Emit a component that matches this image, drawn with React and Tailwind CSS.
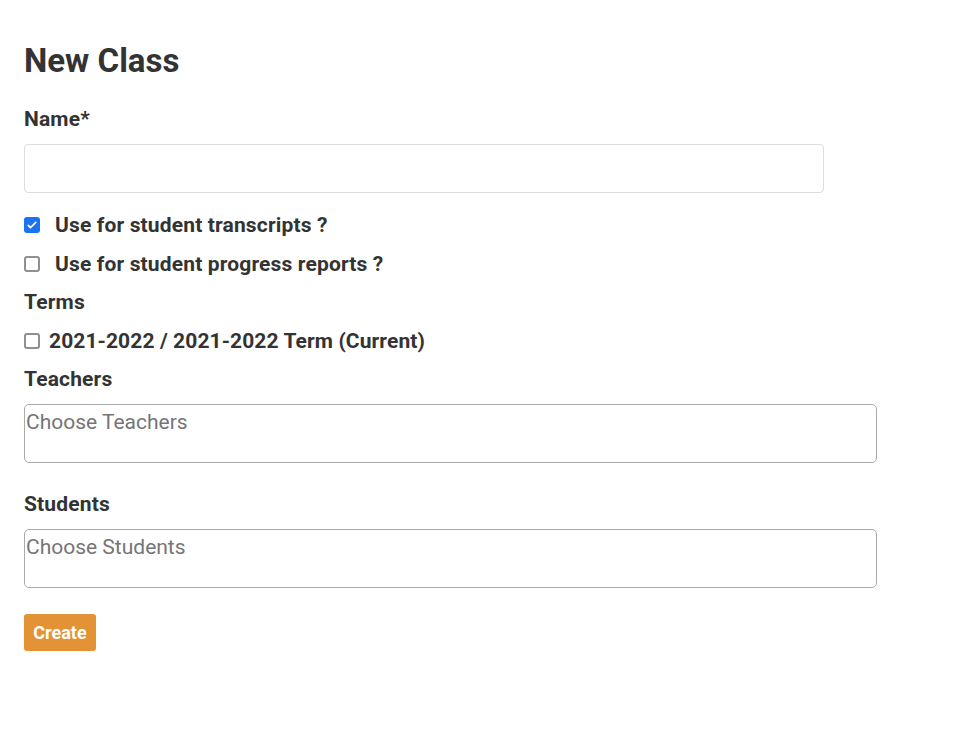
import { useState } from "react";

function Box({ checked, onClick }) {
	return (
		<span
			onClick={onClick}
			className={
				checked
					? "flex h-4 w-4 shrink-0 items-center justify-center rounded-[3px] bg-[#1a73f0]"
					: "flex h-4 w-4 shrink-0 rounded-[3px] border-2 border-[#8e8e93] bg-white"
			}
		>
			{checked && (
				<svg viewBox="0 0 16 16" className="h-3 w-3" fill="none">
					<path d="M3 8.5l3 3 7-7" stroke="white" strokeWidth="2.2" strokeLinecap="round" strokeLinejoin="round" />
				</svg>
			)}
		</span>
	);
}

export default function App() {
	const [transcripts, setTranscripts] = useState(true);
	const [progress, setProgress] = useState(false);
	const [term, setTerm] = useState(false);

	return (
		<div className="min-h-screen bg-white px-6 pt-[41px] text-[#333] font-['Roboto',sans-serif]">
			<h1 className="text-[33px] font-bold leading-[40px]">New Class</h1>

			{/* Name */}
			<label className="mt-[26px] block text-[21px] font-bold leading-[24px] tracking-[0.15px]">Name*</label>
			<input className="mt-[13px] block h-[49px] w-[800px] rounded-[4px] border border-[#dddddd] bg-white px-3 outline-none" />

			{/* flags */}
			<div className="mt-[20px] flex items-center gap-[15px] text-[21px] font-bold leading-[24px] tracking-[0.15px]">
				<Box checked={transcripts} onClick={() => setTranscripts(!transcripts)} />
				<span>Use for student transcripts ?</span>
			</div>
			<div className="mt-[15px] flex items-center gap-[15px] text-[21px] font-bold leading-[24px] tracking-[0.15px]">
				<Box checked={progress} onClick={() => setProgress(!progress)} />
				<span>Use for student progress reports ?</span>
			</div>

			<div className="mt-[14px] text-[21px] font-bold leading-[24px] tracking-[0.15px]">Terms</div>
			<div className="mt-[15px] flex items-center gap-[9px] text-[21px] font-bold leading-[24px] tracking-[0.1px]">
				<Box checked={term} onClick={() => setTerm(!term)} />
				<span>2021-2022 / 2021-2022 Term (Current)</span>
			</div>

			{/* Teachers */}
			<div className="mt-[14px] text-[21px] font-bold leading-[24px] tracking-[0.15px]">Teachers</div>
			<div className="mt-[13px] h-[59px] w-[853px] rounded-[5px] border border-[#aaaaaa] pl-px pt-[5px] text-[21px] leading-[24px] text-[#757575]">
				Choose Teachers
			</div>

			{/* Students */}
			<div className="mt-[29px] text-[21px] font-bold leading-[24px] tracking-[0.15px]">Students</div>
			<div className="mt-[13px] h-[59px] w-[853px] rounded-[5px] border border-[#aaaaaa] pl-px pt-[5px] text-[21px] leading-[24px] text-[#757575]">
				Choose Students
			</div>

			<button className="mt-[26px] block h-[37px] w-[72px] rounded-[3px] bg-[#e39236] text-[18px] font-bold text-white">
				Create
			</button>
		</div>
	);
}
